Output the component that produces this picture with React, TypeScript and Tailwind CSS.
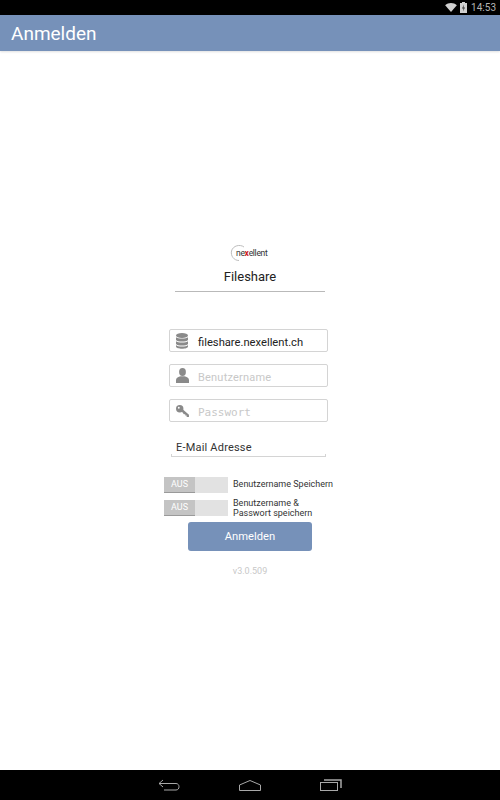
import { ReactNode } from "react";

function Field({ icon, children }: { icon: ReactNode; children: ReactNode }) {
  return (
    <div className="flex items-center w-[159px] h-[23px] rounded-[2px] border border-[#d4d4d4] bg-white">
      <div className="w-[28px] pr-[4px] flex justify-center shrink-0">{icon}</div>
      <div className="pt-[1px]">{children}</div>
    </div>
  );
}

function Toggle() {
  return (
    <div className="flex w-[64px] h-[16px] bg-[#e2e2e2] shrink-0">
      <div className="w-[31px] h-full bg-[#c4c4c4] border-b border-[#9a9a9a] text-white text-[9px] leading-[15px] text-center">
        AUS
      </div>
    </div>
  );
}

export default function App() {
  return (
    <div className="flex flex-col w-[500px] h-[800px] bg-white font-['Roboto',sans-serif] overflow-hidden">
      {/* status bar */}
      <div className="flex items-center justify-end h-[15px] bg-black pr-[4px] text-[#b4b4b4] text-[10px] shrink-0">
        <svg className="mr-[3px]" width="12" height="9" viewBox="0 0 13 10">
          <path d="M0 2.5C3.5-.8 9.5-.8 13 2.5L6.5 10z" fill="#d0d0d0" />
        </svg>
        <svg className="mr-[4px]" width="7" height="11" viewBox="0 0 7 11">
          <rect x="2" y="0" width="3" height="1.5" fill="#d0d0d0" />
          <rect x="0" y="1" width="7" height="10" fill="#d0d0d0" />
          <path d="M4 2.5 2 6.5h1.5L3 9.5l2-4H3.5z" fill="#333" />
        </svg>
        <span className="leading-none">14:53</span>
      </div>

      {/* action bar */}
      <div className="flex items-center h-[36px] pl-[11px] pt-[3px] bg-[#7691b9] text-white text-[19px] shrink-0 shadow-[0_1px_2px_rgba(0,0,0,0.12)]">
        Anmelden
      </div>

      <div className="flex-1 flex flex-col items-center pt-[193px]">
        {/* logo */}
        <div className="relative flex items-center h-[18px] w-[38px] text-[8.5px] tracking-[-0.3px] text-[#333]">
          <svg className="absolute -left-[1px] top-0" width="18" height="18" viewBox="0 0 18 18">
            <path d="M14 3C10 0 3 1.500 1.500 7C.5 12 4 16.500 9 16.500" fill="none" stroke="#bdbdbd" strokeWidth="1" />
          </svg>
          <span className="relative pl-[5px] whitespace-nowrap">
            ne<span className="text-[#d01c1c] font-bold">x</span>ellent
          </span>
        </div>
        <div className="mt-[6px] w-[150px] h-[24px] border-b border-[#b9b9b9] text-center text-[13px] leading-[18px] text-[#222]">
          Fileshare
        </div>

        <div className="flex flex-col items-center gap-[12px] mt-[37px] mr-[3px]">
          <Field
            icon={
              <svg width="12" height="16" viewBox="0 0 12 16" fill="#8a8a8a">
                <ellipse cx="6" cy="2.5" rx="6" ry="2.5" />
                <path d="M0 4.2C1.5 6 10.5 6 12 4.2V7C10.5 9 1.5 9 0 7z" />
                <path d="M0 8.2C1.5 10 10.5 10 12 8.2V11C10.5 13 1.5 13 0 11z" />
                <path d="M0 12C1.5 14 10.5 14 12 12V13.5C12 16.5 0 16.5 0 13.5z" />
              </svg>
            }
          >
            <span className="text-[11.2px] text-[#222]">fileshare.nexellent.ch</span>
          </Field>
          <Field
            icon={
              <svg width="13" height="15" viewBox="0 0 13 15" fill="#8a8a8a">
                <ellipse cx="6.5" cy="4" rx="3.4" ry="4" />
                <path d="M0 15V12C0 9.8 2.5 9 4.5 8.3H8.5C10.5 9 13 9.800 13 12V15z" />
              </svg>
            }
          >
            <span className="text-[11px] text-[#c8c8c8] tracking-[0.2px]">Benutzername</span>
          </Field>
          <Field
            icon={
              <svg width="13" height="12" viewBox="0 0 14 13" fill="#8a8a8a">
                <circle cx="4" cy="4" r="4" />
                <path d="M5 5.5 6.5 4 14 10.5V13H11.5V11.5H10V10H8.5z" />
                <circle cx="3" cy="3" r="1" fill="#fff" />
              </svg>
            }
          >
            <span className="font-['DejaVu_Sans_Mono',monospace] text-[11px] text-[#c8c8c8]">Passwort</span>
          </Field>
        </div>

        <div className="relative mt-[12px] mr-[3px] w-[155px] h-[23px] border-b border-[#d4d4d4] pl-[5px] text-[11px] leading-[27px] text-[#333] tracking-[0.2px] before:absolute before:left-0 before:bottom-0 before:w-px before:h-[2px] before:bg-[#d4d4d4] after:absolute after:right-0 after:bottom-0 after:w-px after:h-[2px] after:bg-[#d4d4d4]">
          E-Mail Adresse
        </div>

        <div className="flex flex-col gap-[5px] w-[172px] mt-[20px]">
          <div className="flex items-center gap-[5px]">
            <Toggle />
            <span className="text-[9px] text-[#333] whitespace-nowrap">Benutzername Speichern</span>
          </div>
          <div className="flex items-center gap-[5px]">
            <Toggle />
            <span className="text-[9px] leading-[10px] text-[#333] whitespace-nowrap">
              Benutzername &amp;
              <br />
              Passwort speichern
            </span>
          </div>
        </div>

        <button className="mt-[4px] w-[124px] h-[29px] pt-[2px] rounded-[3px] bg-[#7691b9] text-white text-[11.2px]">
          Anmelden
        </button>
        <div className="mt-[14px] text-[9px] text-[#c8c8c8]">v3.0.509</div>
      </div>

      {/* nav bar */}
      <div className="flex items-center justify-center h-[30px] bg-black gap-[59px] shrink-0">
        <svg width="22" height="12" viewBox="0 0 22 12" fill="none" stroke="#a8a8a8" strokeWidth="1">
          <path d="M5 1 1 4.5 5 8M1 4.5H18C22 4.5 22 11 18 11H6" />
        </svg>
        <svg width="22" height="11" viewBox="0 0 22 11" fill="none" stroke="#a8a8a8" strokeWidth="1">
          <path d="M.5 5 11 .5 21.5 5V10.5H.5z" />
        </svg>
        <svg width="22" height="12" viewBox="0 0 22 12" fill="none" stroke="#a8a8a8" strokeWidth="1">
          <rect x=".5" y="3.5" width="17" height="8" />
          <path d="M4 1H21V9" strokeWidth="1.5" />
        </svg>
      </div>
    </div>
  );
}
